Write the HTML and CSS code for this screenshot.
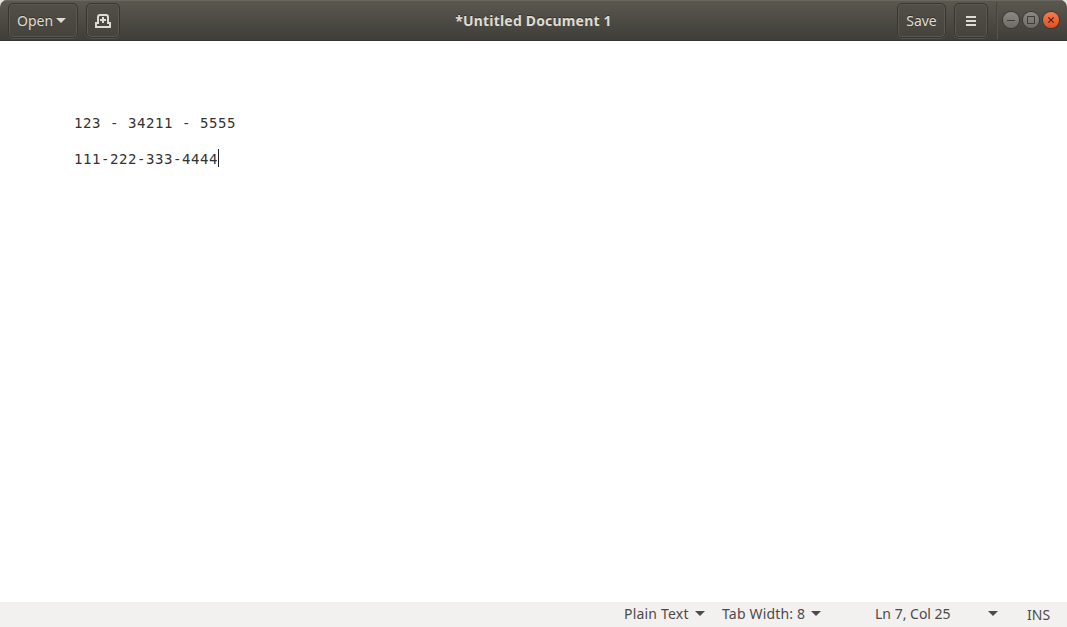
FILE: index.html
```html
<!DOCTYPE html>
<html lang="en">
<head>
<meta charset="utf-8">
<title>*Untitled Document 1</title>
<link rel="stylesheet" href="styles.css">
</head>
<body>
<div class="window">
  <header class="headerbar">
    <div class="side side-start">
      <button class="btn btn-open"><span class="open-label">Open</span><svg class="arrow" width="10" height="5" viewBox="0 0 10 5"><path d="M0 0h10L5 5z"/></svg></button>
      <button class="btn btn-icon" aria-label="New tab">
        <svg width="16" height="14" viewBox="0 0 16 14" fill="none" stroke="#dfdbd2" stroke-width="2"><path d="M3 9V3Q3 1 5 1H11Q13 1 13 3V9H15V13H1V9H4"/><path d="M8 3v6M5 6h6"/></svg>
      </button>
    </div>
    <h1 class="title"><span>*Untitled Document 1</span></h1>
    <div class="side side-end">
      <button class="btn btn-save"><span>Save</span></button>
      <button class="btn btn-icon" aria-label="Menu">
        <svg width="10" height="10" viewBox="0 0 10 10" fill="#dfdbd2"><path d="M0 0h10v2H0zM0 4h10v2H0zM0 8h10v2H0z"/></svg>
      </button>
      <div class="controls">
        <span class="control"><svg width="16" height="16" viewBox="0 0 16 16"><path d="M4 8.5h8"/></svg></span>
        <span class="control"><svg width="16" height="16" viewBox="0 0 16 16"><path d="M4.5 4.5h7v7h-7z"/></svg></span>
        <span class="control control-close"><svg width="16" height="16" viewBox="0 0 16 16"><path d="M5.3 5.3l5.4 5.4M10.7 5.3l-5.4 5.4"/></svg></span>
      </div>
    </div>
  </header>
  <main class="editor">
    <div class="line">123 - 34211 - 5555</div>
    <div class="line"></div>
    <div class="line">111-222-333-4444<span class="caret"></span></div>
  </main>
  <footer class="statusbar">
    <div class="status language"><span>Plain Text</span><svg class="arrow" width="10" height="5" viewBox="0 0 10 5"><path d="M0 0h10L5 5z"/></svg></div>
    <div class="status tabs"><span>Tab Width: 8</span><svg class="arrow" width="10" height="5" viewBox="0 0 10 5"><path d="M0 0h10L5 5z"/></svg></div>
    <div class="status position"><span>Ln 7, Col 25</span><svg class="arrow" width="10" height="5" viewBox="0 0 10 5"><path d="M0 0h10L5 5z"/></svg></div>
    <div class="status mode"><span>INS</span></div>
  </footer>
</div>
</body>
</html>
```
FILE: styles.css
```css
* { box-sizing: border-box; }
body { margin: 0; background: #e4e4e4; font: 14px/20px "Noto Sans", "Open Sans", sans-serif; }
.window { display: flex; flex-direction: column; width: 1067px; height: 627px; overflow: hidden; border-radius: 7px 7px 0 0; background: #fff; }
.headerbar {
  display: flex; justify-content: space-between; flex: 0 0 41px; height: 41px;
  color: #dfdbd2; background: linear-gradient(#5b584f, #3f3e39);
  border-bottom: 1px solid #373632; box-shadow: inset 0 1px #6a675e;
}
.side { display: flex; align-items: flex-start; padding-top: 3px; }
.side-start { padding-left: 8px; gap: 8px; width: 260px; }
.side-end { justify-content: flex-end; width: 260px; gap: 8px; }
.btn {
  display: flex; align-items: center; justify-content: center; height: 35px; padding: 0;
  color: inherit; font: inherit; border: 1px solid #37362f; border-radius: 5px;
  background: linear-gradient(#524f47, #45433d);
  box-shadow: inset 0 0 0 1px #5a5850, 0 1px #55534c;
  text-shadow: 0 -1px rgba(0,0,0,.35);
}
.btn span, .title span { white-space: nowrap; }
.btn-open { width: 70px; justify-content: flex-start; padding-left: 8px; gap: 3px; }
.open-label { width: 36px; }
.btn-open .arrow { fill: #dfdbd2; }
.btn-icon { width: 34px; }
.btn-save { width: 49px; }
.title { margin: 0; padding-top: 11px; font-size: 14px; line-height: 20px; font-weight: 700; letter-spacing: .18px; text-shadow: 0 -1px rgba(0,0,0,.4); }
.controls { display: flex; gap: 4px; width: 71px; height: 37px; margin-top: -1px; padding: 10px 0 0 6px; border-left: 1px solid #45433d; box-shadow: inset 1px 0 #56544c; }
.control { display: flex; flex: 0 0 16px; height: 16px; border-radius: 50%; background: linear-gradient(#8b8982, #6d6b65); box-shadow: 0 0 0 1px #3b3934; }
.control svg { fill: none; stroke: #3d3b36; stroke-width: 1; }
.control-close { background: linear-gradient(#f67b52, #e3501d); }
.control-close svg { stroke: #4a2012; stroke-width: 1.2; }
.editor { flex: 1; padding: 73px 74px 0; color: #333; background: #fff; font: 14px/18px "DejaVu Sans Mono", monospace; letter-spacing: .572px; }
.line { display: flex; height: 18px; white-space: pre; }
.caret { width: 1px; height: 18px; margin-top: -1px; background: #222; }
.statusbar { display: flex; flex: 0 0 25px; height: 25px; padding-left: 624px; color: #4b4b4b; background: #f2f1f0; }
.status { display: flex; align-items: center; white-space: nowrap; height: 24px; }
.status .arrow { fill: #4b4b4b; margin-top: -1px; }
.language { width: 98px; }
.language span { width: 71px; letter-spacing: .2px; }
.tabs { width: 153px; }
.tabs span { width: 89px; letter-spacing: .18px; }
.position { width: 152px; }
.position span { width: 113px; }
.mode { height: 26px; }
```
